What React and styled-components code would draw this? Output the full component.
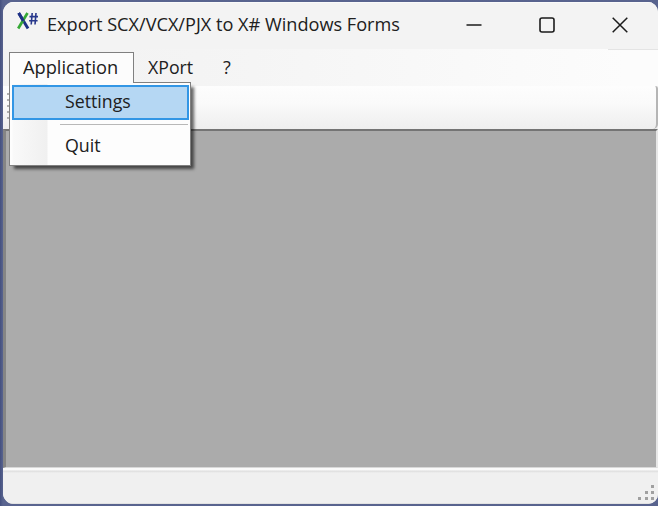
import React from "react";
import styled, { createGlobalStyle } from "styled-components";

const GlobalStyle = createGlobalStyle`
  * { box-sizing: border-box; }
  body { margin: 0; overflow: hidden; }
`;

const Desktop = styled.div`
  width: 658px;
  height: 506px;
  padding: 2px 0 2px 3px;
  background: linear-gradient(90deg, #44507f 0, #59648f 3px, #58638e 100%);
  font-family: "Open Sans", "Noto Sans", sans-serif;
  color: #202020;
`;

const Window = styled.div`
  width: 655px;
  height: 502px;
  display: flex;
  flex-direction: column;
  background: #f0f0f0;
  border-radius: 11px 10px 10px 11px;
  overflow: hidden;
`;

const TitleBar = styled.header`
  height: 47px;
  flex: none;
  display: flex;
  align-items: flex-start;
  background: #f3f3f3;
  border-top: 1px solid #fafafa;
`;

const Logo = styled.svg`
  flex: none;
  width: 22px;
  height: 20px;
  margin: 9px 0 0 14px;
`;

const Label = styled.span`
  display: inline-block;
  white-space: nowrap;
  line-height: 24px;
  font-size: ${(p) => p.$size || 18}px;
  transform: scaleX(${(p) => p.$fit || 1});
  transform-origin: left center;
`;

const Title = styled.div`
  width: 412px;
  margin: 9px 0 0 8px;
  height: 24px;
`;

const Controls = styled.div`
  display: flex;
  margin-left: auto;
  padding-right: 2px;
`;

const ControlButton = styled.button`
  width: 73px;
  height: 44px;
  padding: 0;
  border: 0;
  background: none;
  display: grid;
  place-items: center;
`;

const MenuBar = styled.nav`
  height: 37px;
  flex: none;
  display: flex;
  padding: 3px 0 0 6px;
  background:
    linear-gradient(#e4e4e4, #e4e4e4) right top / 50px 1px no-repeat,
    linear-gradient(90deg, #f2f2f2 0, #f4f4f4 30%, #fcfcfc 95%);
`;

const MenuItem = styled.div`
  position: relative;
  width: ${(p) => p.$width}px;
  height: 31px;
  padding: 2px 0 0 ${(p) => p.$inset}px;
  border: 1px solid ${(p) => (p.$open ? "#808080" : "transparent")};
  border-bottom: 0;
  background: ${(p) => (p.$open ? "#fcfcfc" : "transparent")};
`;

const Dropdown = styled.div`
  position: absolute;
  z-index: 2;
  top: 29px;
  left: -1px;
  width: 182px;
  height: 84px;
  padding: 2px;
  border: 1px solid #808080;
  background: linear-gradient(90deg, #fdfdfd 2px, #f9f9f9 3px, #f0f0f0 37px, #fdfdfd 38px);
  box-shadow: 4px 4px 3px -1px rgba(0, 0, 0, 0.6);
`;

const MenuSeam = styled.div`
  position: absolute;
  top: -1px;
  left: 0;
  width: 123px;
  height: 2px;
  background: #fcfcfc;
`;

const DropdownItem = styled.div`
  height: 35px;
  width: 177px;
  padding: ${(p) => (p.$active ? 2 : 3)}px 0 0 51px;
  border: 2px solid ${(p) => (p.$active ? "#3296e5" : "transparent")};
  background: ${(p) => (p.$active ? "#b5d7f3" : "transparent")};
`;

const Separator = styled.div`
  height: 1px;
  width: 128px;
  margin: 4px 0 3px 48px;
  background: #b8b8b8;
`;

const Toolbar = styled.div`
  height: 43px;
  flex: none;
  padding: 7px 0 0 4px;
  background: linear-gradient(#fdfdfd, #fafafa 40%, #eeeeee);
  border-right: 2px solid #b5b5b5;
  border-radius: 0 3px 5px 4px;
`;

const Grip = styled.div`
  width: 2px;
  height: 28px;
  background: repeating-linear-gradient(#b0b0b0 0 2px, transparent 2px 6px);
`;

const Workspace = styled.main`
  height: 339px;
  flex: none;
  background: #ababab;
  border: solid;
  border-width: 2px 2px 1px 3px;
  border-color: #747474 #e7e7e7 #d8d8d8 #858585;
`;

const StatusBar = styled.footer`
  flex: 1;
  display: flex;
  justify-content: flex-end;
  align-items: flex-end;
  padding: 0 4px 2px 0;
  background: linear-gradient(#fafafa 0 2px, #dddddd 3px, #f0f0f0 5px);
  border-bottom: 1px solid #e2e2e2;
`;

export default function App() {
  return (
    <>
      <GlobalStyle />
      <Desktop>
        <Window>
          <TitleBar>
            <Logo viewBox="0 0 22 20" fill="none">
              <path d="M1.7 1 11 16.5" stroke="#1d3185" strokeWidth="2.9" />
              <path d="M10.5 1 1.2 16.5" stroke="#36a936" strokeWidth="2.7" />
              <path d="M1.7 1 6.4 9" stroke="#1d3185" strokeWidth="2.9" />
              <path d="M15.2 1 14.2 12.5M19 1 18 12.5M12.5 4.6h8.5M12.1 8.8h8.5" stroke="#29398c" strokeWidth="1.6" />
            </Logo>
            <Title><Label $size={18.4} $fit={0.986}>Export SCX/VCX/PJX to X# Windows Forms</Label></Title>
            <Controls>
              <ControlButton aria-label="Minimize">
                <svg width="16" height="16" stroke="#1b1b1b" strokeWidth="1.5"><path d="M.5 8h15" /></svg>
              </ControlButton>
              <ControlButton aria-label="Maximize">
                <svg width="16" height="16" fill="none" stroke="#1b1b1b" strokeWidth="1.6"><rect x="1" y="1" width="14" height="14" rx="2" /></svg>
              </ControlButton>
              <ControlButton aria-label="Close">
                <svg width="16" height="16" stroke="#1b1b1b" strokeWidth="1.5"><path d="M.7.7l14.6 14.6M15.3.7.7 15.3" /></svg>
              </ControlButton>
            </Controls>
          </TitleBar>
          <MenuBar>
            <MenuItem $open $width={125} $inset={13}>
              <Label $fit={1.013}>Application</Label>
              <Dropdown>
                <MenuSeam />
                <DropdownItem $active><Label $fit={0.985}>Settings</Label></DropdownItem>
                <Separator />
                <DropdownItem><Label $fit={0.99}>Quit</Label></DropdownItem>
              </Dropdown>
            </MenuItem>
            <MenuItem $width={75} $inset={13}><Label $fit={0.985}>XPort</Label></MenuItem>
            <MenuItem $width={30} $inset={13}><Label>?</Label></MenuItem>
          </MenuBar>
          <Toolbar><Grip /></Toolbar>
          <Workspace />
          <StatusBar>
            <svg width="16" height="16" fill="#a0a0a0">
              <path d="M13 0h3v3h-3zM7 6h3v3H7zM13 6h3v3h-3zM0 12h3v3H0zM7 12h3v3H7zM13 12h3v3h-3z" />
            </svg>
          </StatusBar>
        </Window>
      </Desktop>
    </>
  );
}
